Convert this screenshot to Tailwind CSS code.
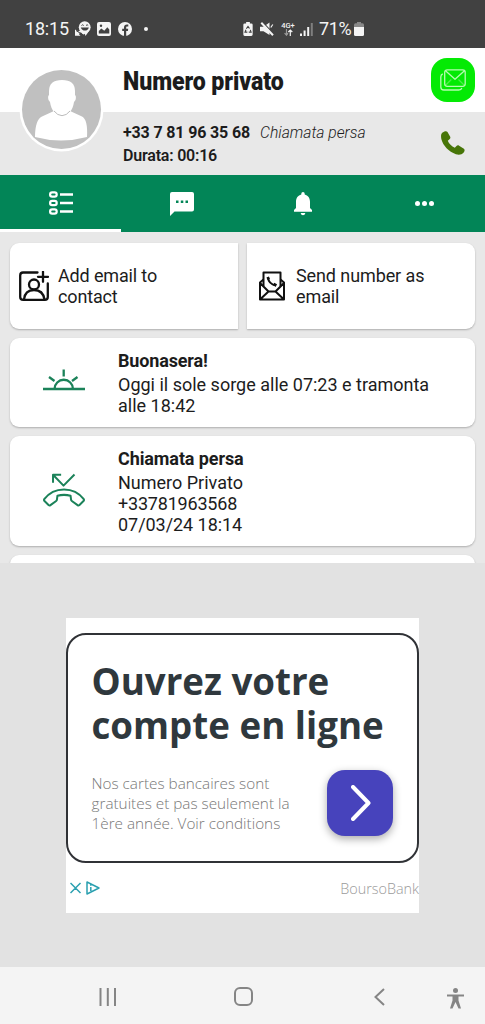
<!DOCTYPE html>
<html lang="it">
<head>
    <meta charset="UTF-8">
    <meta name="viewport" content="width=device-width, initial-scale=1.0">
    <title>Numero privato</title>
    <script src="https://cdn.jsdelivr.net/npm/@tailwindcss/browser@4"></script>
</head>
<body class="bg-[#e2e2e2] font-['Roboto',sans-serif] text-[#1c1c1c]">
    <div class="flex h-[1024px] w-[485px] flex-col overflow-hidden">

        <!-- Status bar -->
        <div class="flex h-12 shrink-0 items-center bg-[#414141] pt-[10px] pl-[25px] text-[#f4f4f4]">
            <span class="w-[50px] whitespace-nowrap text-[18px] leading-5 tracking-[-0.2px]">18:15</span>
            <svg class="h-4 w-4" viewBox="0 0 16 16" fill="currentColor">
                <circle cx="9.7" cy="6.2" r="5.9"/>
                <path d="M9 10h5l-3.500 5z"/>
                <path d="M0 8.500v6.300h5.500L3.800 13l2-1.800 2.400 2.600 3.600-2L7 8.500 3.500 10.500z"/>
                <path d="M5.800 6.400h8c-.5 4-7 4.200-8 0z" fill="#414141"/>
                <path d="M6.500 4.500q1.200-1.500 2.200 0M11 4.500q1.200-1.500 2.200 0M1 9.500l8 5" stroke="#414141" fill="none"/>
            </svg>
            <svg class="ml-[6px] h-[14px] w-[14px]" viewBox="0 0 14 14">
                <rect width="14" height="14" rx="2" fill="currentColor"/>
                <path d="M1.800 11.500V9l2.500-2.600 3 2.400 3-3.600 2 2.300v4z" fill="#414141"/>
                <circle cx="4" cy="3.700" r="1.200" fill="#414141"/>
            </svg>
            <svg class="ml-[7px] h-[14px] w-[14px]" viewBox="0 0 14 14">
                <circle cx="7" cy="7" r="7" fill="currentColor"/>
                <path d="M6 14V9H4.200V6.800H6V5.300C6 3.400 7.100 2.400 8.900 2.400h1.400v2H9.200c-.8 0-1 .4-1 1v1.400h2L9.900 9H8.200v5z" fill="#414141"/>
            </svg>
            <span class="ml-[12px] h-1 w-1 rounded-full bg-[#f4f4f4]"></span>
            <svg class="ml-[95px] h-[14px] w-[10px]" viewBox="0 0 10 15">
                <path d="M3 0h4v1.500h1.500Q10 1.500 10 3v10.500Q10 15 8.500 15h-7Q0 15 0 13.500V3q0-1.500 1.500-1.500H3z" fill="currentColor"/>
                <path d="M3.200 7.200L5 4.700l1.600 2.300M7.500 8.500l.8 2.300H5.800M4.300 10.800H1.800l1-2.500" fill="none" stroke="#414141" stroke-width="1.200"/>
            </svg>
            <svg class="ml-[7px] h-[14px] w-[14px]" viewBox="0 0 14 14">
                <path d="M0 4.800h3.500L9.500.5v12.500L3.500 9.200H0z" fill="currentColor"/>
                <path d="M2.500 0L14 12" stroke="#414141" stroke-width="1.200"/>
                <path d="M1.300.8L13 13.300" stroke="currentColor" stroke-width="2"/>
                <path d="M10.800 5.500l2-3" stroke="currentColor" stroke-width="1.200"/>
            </svg>
            <div class="ml-[6px] flex w-[16px] flex-col items-center">
                <span class="text-[7.500px] leading-[7px] font-medium">4G+</span>
                <svg class="h-[7px] w-[9px]" viewBox="0 0 9 7" fill="none" stroke="currentColor" stroke-width="1.200">
                    <path d="M2.500 0v6M.6 4.200l1.900 2 1.500-2" opacity=".5"/>
                    <path d="M6.300 7V1M4.300 3l2-2 2 2"/>
                </svg>
            </div>
            <svg class="ml-[4px] h-[13px] w-[13px]" viewBox="0 0 13 13" fill="currentColor">
                <path d="M0 10.500h2V13H0zM3.600 7.500h2V13h-2zM7.200 4h2v9h-2z"/>
                <path d="M10.800 0h2v13h-2z" opacity=".35"/>
            </svg>
            <span class="ml-[6px] w-[34px] whitespace-nowrap text-[18px] leading-5 tracking-[-0.4px]">71%</span>
            <svg class="ml-px h-[14px] w-[10px]" viewBox="0 0 10 14">
                <path d="M3 0h4v1.300h1.500Q10 1.300 10 3v3H0V3q0-1.700 1.500-1.700H3z" fill="#888"/>
                <path d="M0 5h10v7.500Q10 14 8.500 14h-7Q0 14 0 12.500z" fill="currentColor"/>
            </svg>
        </div>

        <!-- Contact header -->
        <div class="relative h-[127px] shrink-0 bg-[#e8e8e8]">
            <div class="flex h-16 items-center justify-between bg-white pr-[10px] pl-[123px]">
                <h1 class="mt-[2px] origin-left scale-x-[0.89] whitespace-nowrap text-[26px] leading-8 font-black tracking-[-0.1px]">Numero privato</h1>
                <div class="flex h-11 w-11 items-center justify-center rounded-[16px] bg-[#04ea04]">
                    <svg class="h-[22px] w-[26px]" viewBox="0 0 26 22" fill="none" stroke="#b5fbb0" stroke-width="1.300" stroke-linejoin="round">
                        <rect x="4.700" y=".8" width="20.500" height="16.500" rx="2.500"/>
                        <path d="M5.500 1.800l9.500 8.500 9.500-8.500"/>
                        <path d="M5.300 16.500l6-6M24.500 16.500l-6-6" opacity=".4"/>
                        <path d="M2.800 5Q.8 5.500.8 8v10q0 3 3 3h15q2.500 0 3-2"/>
                    </svg>
                </div>
            </div>
            <div class="flex items-start justify-between pt-[9px] pr-[20px] pl-[123px]">
                <div>
                    <p class="flex gap-[9px] text-[16px] leading-[23px] whitespace-nowrap">
                        <b class="w-[128px] tracking-[-0.15px]">+33 7 81 96 35 68</b>
                        <i class="origin-left scale-x-[0.98] font-light">Chiamata persa</i>
                    </p>
                    <p class="text-[16px] leading-[23px] font-semibold tracking-[-0.2px]">Durata: 00:16</p>
                </div>
                <svg class="mt-[10px] h-6 w-6" viewBox="0 0 24 24" fill="#477508">
                    <path d="M1.200 1.800C3 .3 5.500-.3 6.500 1l2.700 4.700c.5 1.200 0 2-.7 2.600L6.800 9.800c1.200 3 3.800 5.500 7 7l1.700-1.800c.7-.7 1.600-.9 2.600-.3l4.800 3c1.200.9.800 2.500-.4 4-1.600 2-4.700 2.500-7.600 1.500C7.800 20.600 2 14.500.4 8.200-.2 5.400-.1 3 1.200 1.800z"/>
                </svg>
            </div>
            <!-- Avatar -->
            <svg class="absolute top-[19px] left-[19px] h-[85px] w-[85px]" viewBox="0 0 85 85">
                <circle cx="42.500" cy="42.500" r="42" fill="#fff"/>
                <circle cx="42.500" cy="42.500" r="39.500" fill="#c0c0c0"/>
                <path d="M16 70q0-17 7-20.500L35 44l1-2h14l1 2 12 5.500q6 3 5 20.500-26 7-52 0z" fill="#fff"/>
                <path d="M30 24Q30 13 43 13t13 11v4q1.500 1 .5 5l-1.500 2Q53 48 43 48.500 33 48 31 35l-1.500-2q-1-4 .5-5z" fill="#fff"/>
                <path d="M35 44q3.500 4.500 8 4.700 4.500-.2 8-4.700" fill="none" stroke="#aaa" stroke-width=".8"/>
            </svg>
        </div>

        <!-- Tabs -->
        <div class="grid h-[57px] shrink-0 grid-cols-4 bg-[#028557] text-white">
            <div class="flex items-center justify-center border-b-[3px] border-white pt-[2px]">
                <svg class="h-6 w-6" viewBox="0 0 24 24" fill="none" stroke="currentColor" stroke-width="2.200">
                    <rect x="1.100" y="1.400" width="6.600" height="4.200" rx="2.100"/>
                    <rect x="1.100" y="9.900" width="6.600" height="4.200" rx="2.100"/>
                    <rect x="1.100" y="18.400" width="6.600" height="4.200" rx="2.100"/>
                    <path d="M11 3.500h13M11 12h13M11 20.500h13" stroke-width="2.300"/>
                </svg>
            </div>
            <div class="flex items-center justify-center">
                <svg class="h-6 w-6" viewBox="0 0 24 24" fill="currentColor">
                    <path d="M2 0h20q2 0 2 2v15.500q0 2-2 2H4.500L0 24V2q0-2 2-2z"/>
                    <path d="M6 8.500h2.500V11H6zM10.800 8.500h2.500V11h-2.500zM15.500 8.500H18V11h-2.500z" fill="#028557"/>
                </svg>
            </div>
            <div class="flex items-center justify-center">
                <svg class="h-6 w-[18px]" viewBox="0 0 18 24" fill="currentColor">
                    <path d="M7.300 2.600V1.700a1.700 1.700 0 013.400 0v.9C14 3.400 16 6.300 16 9.800V16l2 2v1.700H0V18l2-2V9.800c0-3.500 2-6.400 5.300-7.200zM6.600 21h4.800q-.5 2.300-2.400 2.300T6.600 21z"/>
                </svg>
            </div>
            <div class="flex items-center justify-center gap-[2px]">
                <span class="h-[5px] w-[5px] rounded-full bg-white"></span>
                <span class="h-[5px] w-[5px] rounded-full bg-white"></span>
                <span class="h-[5px] w-[5px] rounded-full bg-white"></span>
            </div>
        </div>

        <!-- Cards -->
        <div class="flex h-[331px] shrink-0 flex-col gap-[9px] overflow-hidden bg-[#e8e8e8] px-[10px] pt-[10.500px]">
            <div class="flex h-[86px] shrink-0 gap-[9px] text-[18px] leading-[21px]">
                <div class="flex w-[228px] items-center rounded-l-[9px] bg-white pl-[9px] shadow-[0_1px_2px_#00000040]">
                    <svg class="mr-[9px] h-[30px] w-[30px]" viewBox="0 0 30 30" fill="none" stroke="#111" stroke-width="2.300" stroke-linecap="round">
                        <path d="M18.500 1.500H4Q1.200 1.500 1.200 4.500V26q0 2.800 3 2.800h21.600q3 0 3-2.800V12.500M24 .8v10M19 5.800h10"/>
                        <circle cx="15" cy="13.500" r="5"/>
                        <path d="M5 28.500q1-9.500 10-9.500t10.500 9.500"/>
                    </svg>
                    <p class="tracking-[-0.15px]">Add email to<br>contact</p>
                </div>
                <div class="flex w-[228px] items-center rounded-r-[9px] bg-white pl-[12px] shadow-[0_1px_2px_#00000040]">
                    <svg class="mr-[11px] h-[30px] w-[26px]" viewBox="0 0 26 30" fill="none" stroke="#111" stroke-width="2" stroke-linejoin="round">
                        <path d="M4.500 15V1.500h17V15"/>
                        <path d="M4.500 8.500L1 11.500v17h24v-17l-3.500-3M1 12l8.500 8.500h7L25 12M1.500 28l8-7.500M24.500 28l-8-7.500"/>
                        <path d="M9 6.500q.5 6.500 8 8" stroke-width="2"/>
                        <path d="M8.700 6l1 2.600M14.600 13l2.800 1.500" stroke-width="2.700"/>
                    </svg>
                    <p class="tracking-[-0.1px]">Send number as<br>email</p>
                </div>
            </div>

            <div class="flex h-[89px] shrink-0 items-center rounded-[9px] bg-white shadow-[0_1px_2px_#00000040]">
                <svg class="mb-[5px] ml-[32px] h-[24px] w-[44px]" viewBox="0 0 44 24" fill="none" stroke="#1b8259" stroke-width="2.300">
                    <path d="M1 21h42M12.500 21a9 9 0 0118.500 0M21.700 1.500v7M7 9l5.500 4M35.500 9L30 13"/>
                </svg>
                <div class="ml-[32px] pt-[2px] text-[18px] leading-[21px]">
                    <h2 class="mb-[3px] font-bold tracking-[-0.15px]">Buonasera!</h2>
                    <p>Oggi il sole sorge alle 07:23 e tramonta<br>alle 18:42</p>
                </div>
            </div>

            <div class="flex h-[110px] shrink-0 items-center rounded-[9px] bg-white shadow-[0_1px_2px_#00000040]">
                <svg class="mb-[2px] ml-[33px] h-[34px] w-[42px]" viewBox="0 0 44 35" preserveAspectRatio="none" fill="none" stroke="#1b8259" stroke-width="2.100" stroke-linejoin="round">
                    <path d="M33 1.500L21.500 13 11 2.300M10.500 10V1.700H19"/>
                    <path d="M1.300 27Q9 17 22 17t20.700 10q.5 1 0 1.500l-4.500 4.500q-1 .8-2 .1l-6-4.300q-.8-.6-.8-1.500l-.5-3.800q-6.900-2-13.800 0l-.5 3.800q0 .9-.8 1.500l-6 4.300q-1 .7-2-.1l-4.500-4.500q-.5-.5 0-1.500z"/>
                </svg>
                <div class="ml-[33px] pt-[2px] text-[18px] leading-[21px]">
                    <h2 class="mb-[3px] font-bold tracking-[-0.1px]">Chiamata persa</h2>
                    <p>Numero Privato<br><span class="tracking-[-0.2px]">+33781963568</span><br><span class="tracking-[-0.05px]">07/03/24 18:14</span></p>
                </div>
            </div>

            <div class="h-[89px] shrink-0 rounded-[9px] bg-white shadow-[0_1px_2px_#00000040]"></div>
        </div>

        <!-- Ad -->
        <div class="flex h-[404px] shrink-0 bg-[#e2e2e2] pt-[54.500px] pl-[65.500px] font-['Open_Sans',sans-serif]">
            <div class="h-[295px] w-[353.500px] bg-white pt-[15px]">
                <div class="h-[230px] rounded-[20px] border-2 border-[#303236] pt-[24px] pl-[24px]">
                    <h2 class="whitespace-nowrap text-[36.700px] leading-[44px] font-bold text-[#2f383d]">Ouvrez votre<br>compte en ligne</h2>
                    <div class="mt-[23px] flex">
                        <p class="mt-[3px] w-[235.500px] whitespace-nowrap text-[15.300px] leading-5 font-light text-[#777]">Nos cartes bancaires sont<br>gratuites et pas seulement la<br>1ère année. Voir conditions</p>
                        <div class="flex h-[66px] w-[66px] items-center justify-center rounded-[18px] bg-[#4743bc] pl-[2px] shadow-[0_3px_8px_#00000055]">
                            <svg class="h-[36px] w-[20px]" viewBox="0 0 20 36" fill="none" stroke="#fff" stroke-width="4" stroke-linecap="round" stroke-linejoin="round">
                                <path d="M2 2l15.500 16L2 34"/>
                            </svg>
                        </div>
                    </div>
                </div>
                <div class="flex items-center pt-[15px] pl-[4.500px]">
                    <svg class="mb-[2px] h-[14px] w-[30px]" viewBox="0 0 30 14" fill="none" stroke="#2ba0b0" stroke-width="1.500">
                        <path d="M.5 2l10 10M10.500 2l-10 10M17 1v12l12-6zM20.800 6v4M20.800 3.600v1.200" stroke-linejoin="round"/>
                    </svg>
                    <span class="ml-auto text-[14.400px] leading-[22px] font-light text-[#9a9a9a]">BoursoBank</span>
                </div>
            </div>
        </div>

        <!-- Navigation bar -->
        <div class="flex h-[57px] shrink-0 items-center bg-[#f4f4f4] pt-[2px] pl-[98.500px] text-[#858585]">
            <svg class="h-[18px] w-[18px]" viewBox="0 0 18 18" stroke="currentColor" stroke-width="2">
                <path d="M1.500 0v18M8.800 0v18M16 0v18"/>
            </svg>
            <span class="ml-[117px] h-[19px] w-[19px] rounded-[6px] border-2 border-[#858585]"></span>
            <svg class="ml-[121px] h-[18px] w-[11px]" viewBox="0 0 11 18" fill="none" stroke="currentColor" stroke-width="2">
                <path d="M10 1L1.500 9 10 17"/>
            </svg>
            <svg class="mt-[3px] ml-[62.500px] h-[21px] w-[17px]" viewBox="0 0 17 21" fill="currentColor">
                <circle cx="8.500" cy="2.500" r="2.500"/>
                <path d="M0 6.500h17v2h-5.500v4l2.500 8h-2.500l-3-6.500-3 6.500H3l2.500-8v-4H0z"/>
            </svg>
        </div>
    </div>
</body>
</html>
